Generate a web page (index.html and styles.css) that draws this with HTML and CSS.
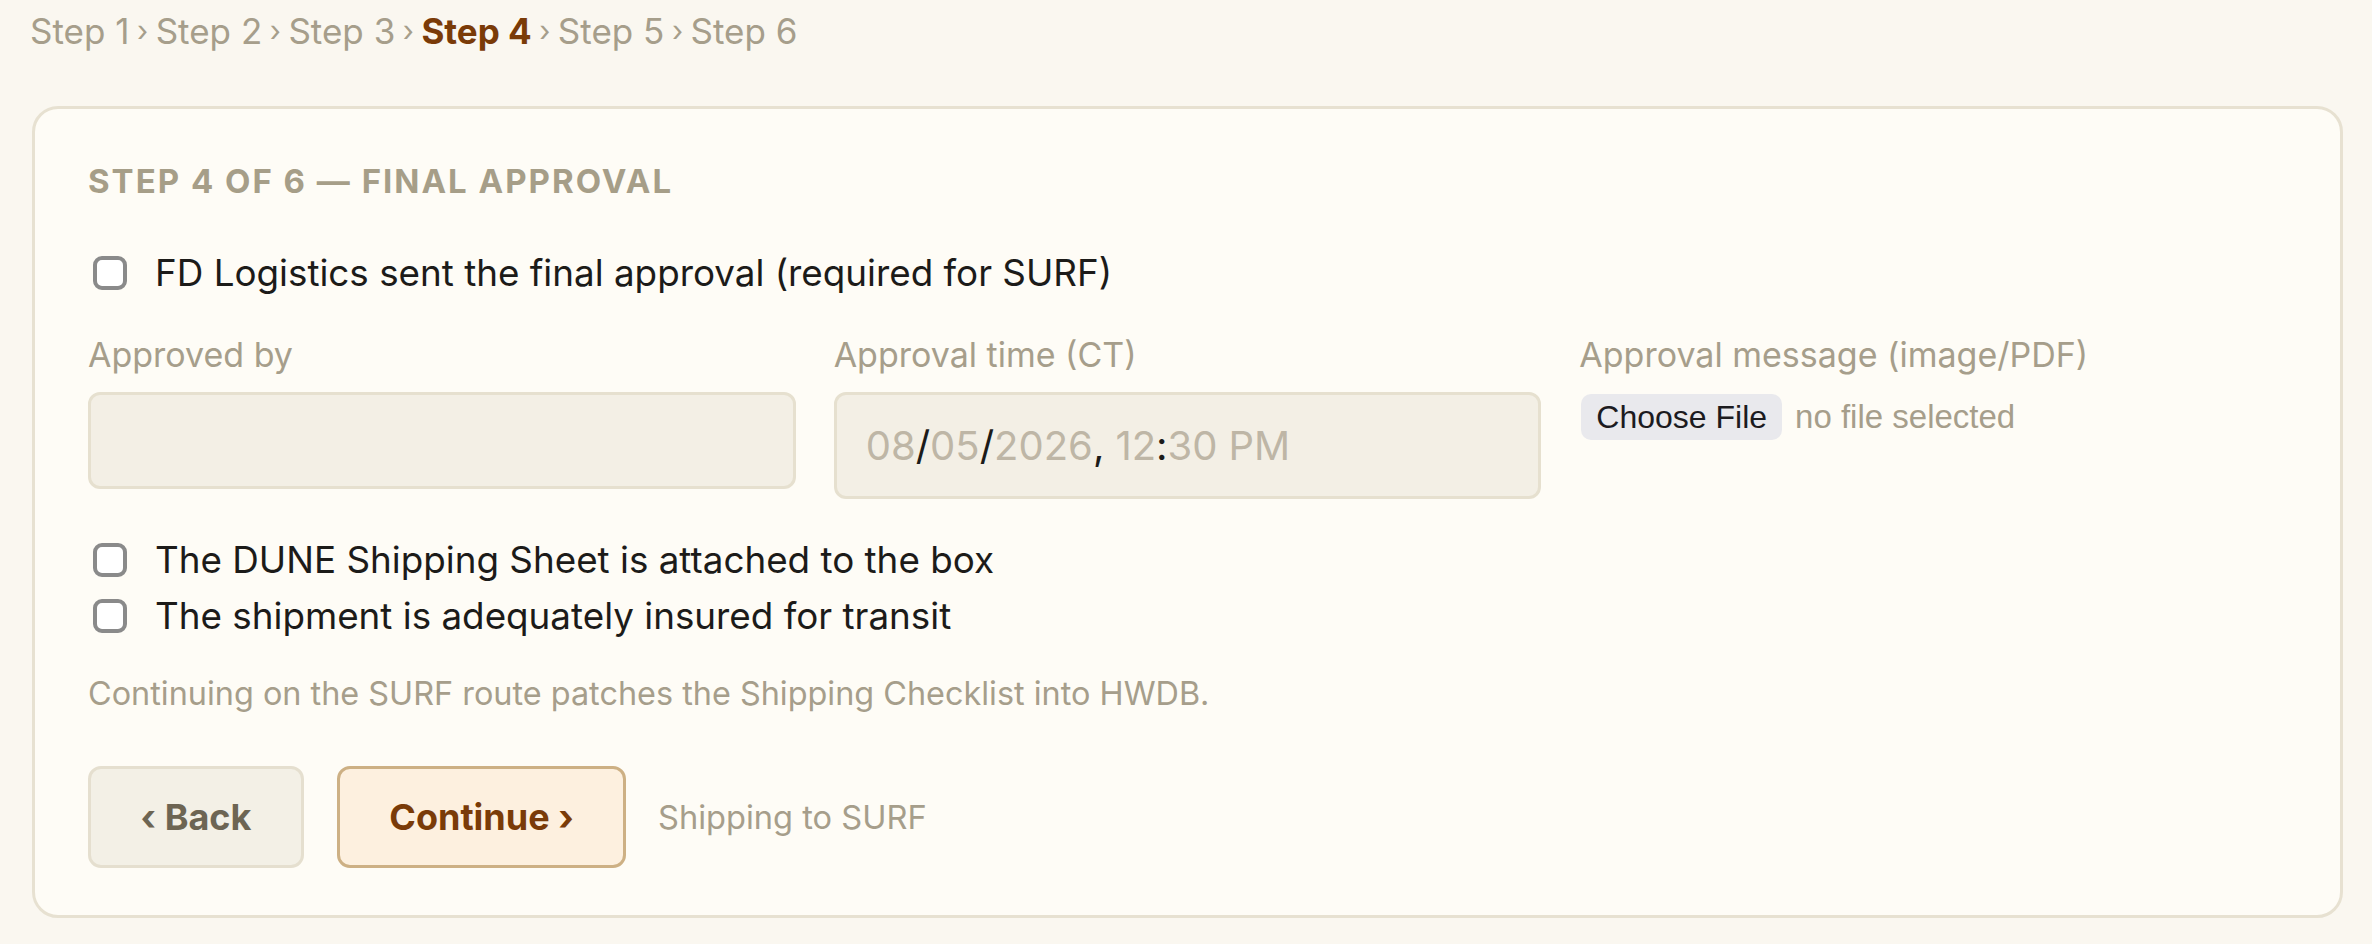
FILE: index.html
```html
<!DOCTYPE html>
<html lang="en">
<head>
<meta charset="utf-8">
<title>Step 4 of 6 — Final approval</title>
<link rel="stylesheet" href="styles.css">
</head>
<body>
<div class="page">
  <nav class="crumbs">
    <span class="crumb">Step 1</span><span class="sep">›</span>
    <span class="crumb">Step 2</span><span class="sep">›</span>
    <span class="crumb">Step 3</span><span class="sep">›</span>
    <span class="crumb current">Step 4</span><span class="sep">›</span>
    <span class="crumb">Step 5</span><span class="sep">›</span>
    <span class="crumb">Step 6</span>
  </nav>

  <section class="card">
    <h2 class="card-title">Step 4 of 6 — Final approval</h2>

    <label class="check first">
      <input type="checkbox" class="box">
      <span class="check-text">FD Logistics sent the final approval (required for SURF)</span>
    </label>

    <div class="fields">
      <div class="field">
        <div class="field-label">Approved by</div>
        <div class="input text-input"></div>
      </div>
      <div class="field">
        <div class="field-label">Approval time (CT)</div>
        <div class="input date-input">
          <span class="seg">08</span><span class="dsep">/</span><span class="seg">05</span><span class="dsep">/</span><span class="seg">2026</span><span class="dsep">,</span><span class="gap"></span><span class="seg">12</span><span class="dsep">:</span><span class="seg">30</span><span class="gap"></span><span class="seg">PM</span>
        </div>
      </div>
      <div class="field">
        <div class="field-label">Approval message (image/PDF)</div>
        <div class="file">
          <button type="button" class="file-btn">Choose File</button>
          <span class="file-name">no file selected</span>
        </div>
      </div>
    </div>

    <div class="checks">
      <label class="check">
        <input type="checkbox" class="box">
        <span class="check-text">The DUNE Shipping Sheet is attached to the box</span>
      </label>
      <label class="check">
        <input type="checkbox" class="box">
        <span class="check-text">The shipment is adequately insured for transit</span>
      </label>
    </div>

    <p class="note">Continuing on the SURF route patches the Shipping Checklist into HWDB.</p>

    <div class="actions">
      <button type="button" class="btn btn-back">‹ Back</button>
      <button type="button" class="btn btn-next">Continue ›</button>
      <span class="route">Shipping to SURF</span>
    </div>
  </section>
</div>
</body>
</html>
```

FILE: styles.css
```css
* { box-sizing: border-box; }

html, body {
  margin: 0;
  padding: 0;
  background: #faf7f0;
}

body {
  font-family: Inter, "Noto Sans", sans-serif;
  color: #1c1b19;
}

.page {
  padding: 5px 29px 0 32px;
}

/* breadcrumb */
.crumbs {
  display: flex;
  align-items: center;
  gap: 7.5px;
  height: 52px;
  margin-left: -2px;
  font-size: 35px;
  line-height: 52px;
  color: #a69e8b;
}

.crumbs .sep {
  font-size: 29px;
}

.crumb.current {
  color: #7a3b08;
  font-weight: 700;
}

/* card */
.card {
  margin-top: 49px;
  background: #fefcf6;
  border: 3px solid #e7e1d1;
  border-radius: 26px;
  padding: 52px 53px 47px 53px;
}

.card-title {
  margin: 0 0 44px;
  height: 40px;
  font-size: 33px;
  line-height: 40px;
  font-weight: 700;
  letter-spacing: 2px;
  text-transform: uppercase;
  color: #a69e88;
}

/* checkboxes */
.check {
  display: flex;
  align-items: center;
  height: 56px;
}

.box {
  appearance: none;
  -webkit-appearance: none;
  flex: none;
  width: 34px;
  height: 34px;
  margin: 0 28px 0 5px;
  background: #ffffff;
  border: 4px solid #8a8a8a;
  border-radius: 9px;
}

.check-text {
  font-size: 36.8px;
  line-height: 56px;
  color: #1c1b19;
}

.check.first {
  margin-bottom: 34px;
}

/* fields */
.fields {
  display: grid;
  grid-template-columns: repeat(3, 1fr);
  column-gap: 38px;
  align-items: start;
  margin-bottom: 33px;
}

.field-label {
  height: 40px;
  margin-bottom: 17px;
  font-size: 34px;
  line-height: 40px;
  color: #a69e8b;
  white-space: nowrap;
}

.input {
  background: #f3efe5;
  border: 3px solid #e6e0cf;
  border-radius: 12px;
}

.text-input {
  height: 97px;
}

.date-input {
  display: flex;
  align-items: center;
  height: 107px;
  padding: 0 29px;
  font-size: 40px;
  color: #beb6a6;
}

.date-input .dsep {
  color: #1c1b19;
}

.date-input .gap {
  width: 11px;
}

.file {
  display: flex;
  align-items: center;
  gap: 13px;
  padding-left: 2px;
  padding-top: 2px;
  font-family: "Liberation Sans", Arial, sans-serif;
}

.file-btn {
  height: 46px;
  padding: 0 15px;
  font-family: "Liberation Sans", Arial, sans-serif;
  font-size: 32px;
  line-height: 46px;
  color: #1c1b1f;
  background: #e9e9ed;
  border: none;
  border-radius: 10px;
}

.file-name {
  font-size: 33px;
  color: #a69e8b;
}

/* note */
.note {
  margin: 30px 0 0;
  height: 40px;
  font-size: 32.4px;
  line-height: 40px;
  color: #a69e8b;
}

/* actions */
.actions {
  display: flex;
  align-items: center;
  margin-top: 52px;
}

.btn {
  height: 102px;
  font-family: Inter, "Noto Sans", sans-serif;
  font-size: 36px;
  font-weight: 700;
  border-radius: 13px;
  border: 3px solid;
}

.btn-back {
  width: 216px;
  color: #6d6553;
  background: #f3f0e6;
  border-color: #e5dfcf;
}

.btn-next {
  width: 289px;
  margin-left: 33px;
  color: #7a3b08;
  background: #fdf0df;
  border-color: #cdb084;
}

.route {
  margin-left: 32px;
  font-size: 32.6px;
  color: #a69e8b;
}
```
